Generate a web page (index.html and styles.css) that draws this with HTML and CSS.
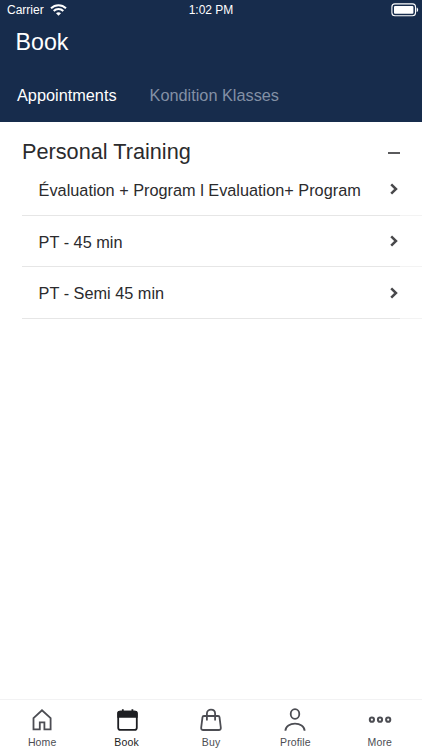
FILE: index.html
```html
<!DOCTYPE html>
<html lang="en">
  <head>
    <meta charset="utf-8" />
    <meta name="viewport" content="width=device-width, initial-scale=1.0" />
    <title>Book</title>
    <link rel="stylesheet" href="styles.css">
  </head>
  <body>
    <header class="header">
      <div class="statusbar">
        <div class="carrier">
          <span>Carrier</span>
          <svg class="wifi" width="17" height="12" viewBox="0 0 17 12" fill="none" stroke="#fff" stroke-width="2">
            <path d="M1 4.3C5.2 0.2 11.8 0.2 16 4.3" />
            <path d="M3.7 7C6.4 4.4 10.6 4.4 13.3 7" />
            <path d="M8.5 11.7L6 9.2C7.4 7.9 9.6 7.9 11 9.2Z" fill="#fff" stroke="none" />
          </svg>
        </div>
        <span class="time">1:02 PM</span>
        <svg class="battery" width="28" height="14" viewBox="0 0 28 14">
          <rect x="0.9" y="0.9" width="23.6" height="11.8" rx="3" fill="none" stroke="#fff" stroke-width="1.1" />
          <rect x="3" y="3" width="19.4" height="7.8" rx="1" fill="#fff" />
          <path d="M25.7 4.4C27.6 5 27.6 8.4 25.7 9Z" fill="#fff" />
        </svg>
      </div>
      <h1 class="title">Book</h1>
      <nav class="tabs">
        <a class="tab active">Appointments</a>
        <a class="tab">Kondition Klasses</a>
      </nav>
    </header>

    <main class="content">
      <div class="section-head">
        <h2>Personal Training</h2>
        <span class="minus"></span>
      </div>
      <ul class="services">
        <li>
          <span>Évaluation + Program l Evaluation+ Program</span>
          <svg class="chevron" width="8" height="12" viewBox="0 0 8 12"><path d="M1.2 1.3L6 6L1.2 10.7" /></svg>
        </li>
        <li>
          <span>PT - 45 min</span>
          <svg class="chevron" width="8" height="12" viewBox="0 0 8 12"><path d="M1.2 1.3L6 6L1.2 10.7" /></svg>
        </li>
        <li>
          <span>PT - Semi 45 min</span>
          <svg class="chevron" width="8" height="12" viewBox="0 0 8 12"><path d="M1.2 1.3L6 6L1.2 10.7" /></svg>
        </li>
      </ul>
    </main>

    <footer class="tabbar">
      <a class="tabbar-item">
        <svg width="24" height="24" viewBox="0 0 24 24">
          <path d="M3.5 10.2L12 2.3L20.6 10.2V21.3H14.4V14.4H9.8V21.3H3.5Z" />
        </svg>
        <span>Home</span>
      </a>
      <a class="tabbar-item active">
        <svg width="24" height="24" viewBox="0 0 24 24">
          <rect x="3.2" y="3.6" width="18.6" height="18.3" rx="2.2" />
          <path d="M3.2 5C3.2 4.2 3.8 3.6 4.6 3.6H20.4C21.2 3.6 21.8 4.2 21.8 5V8.8H3.2Z" fill="#1d1e22" />
          <path d="M7.8 1.3V5M17.4 1.3V5" />
        </svg>
        <span>Book</span>
      </a>
      <a class="tabbar-item">
        <svg width="24" height="24" viewBox="0 0 24 24">
          <path d="M4.9 8H19.1C19.9 8 20.4 8.4 20.5 9.1L21.8 19.5C22 21.2 21.2 22 19.8 22H4.2C2.8 22 2 21.2 2.2 19.5L3.5 9.1C3.6 8.4 4.1 8 4.9 8Z" />
          <path d="M7.9 12.5V5.6C7.9 0.3 16.1 0.3 16.1 5.6V12.5" />
        </svg>
        <span>Buy</span>
      </a>
      <a class="tabbar-item">
        <svg width="24" height="24" viewBox="0 0 24 24">
          <ellipse cx="12" cy="6" rx="4.3" ry="4.8" />
          <path d="M2.4 22.8C2.4 13.2 21.6 13.2 21.6 22.8" />
        </svg>
        <span>Profile</span>
      </a>
      <a class="tabbar-item">
        <svg class="dots" width="24" height="24" viewBox="0 0 24 24">
          <circle cx="3.9" cy="11.7" r="2.1" />
          <circle cx="12" cy="11.7" r="2.1" />
          <circle cx="20.2" cy="11.7" r="2.1" />
        </svg>
        <span>More</span>
      </a>
    </footer>
  </body>
</html>
```
FILE: styles.css
```css
* {
  box-sizing: border-box;
}

body {
  display: flex;
  flex-direction: column;
  height: 100vh;
  margin: 0;
  overflow: hidden;
  background-color: #fff;
  color: #2b2b2d;
  font-family: "Liberation Sans", Arial, sans-serif;
}

.header {
  height: 122px;
  background-color: #172c4c;
  color: #fff;
}

.statusbar {
  display: grid;
  grid-template-columns: 1fr auto 1fr;
  align-items: center;
  height: 20px;
  padding: 0 3px 0 7px;
  font-size: 12px;
}

.carrier {
  display: flex;
  align-items: center;
  gap: 6px;
}

.time {
  padding-right: 4px;
  font-size: 12px;
}

.battery {
  justify-self: end;
}

.title {
  margin: 7px 0 0 15.6px;
  font-size: 23.2px;
  font-weight: normal;
  line-height: 30px;
}

.tabs {
  display: flex;
  gap: 33px;
  margin-top: 23px;
  padding-left: 17px;
  font-size: 16.3px;
  line-height: 30px;
}

.tab {
  color: #8390a5;
}

.tab.active {
  color: #fff;
}

.content {
  flex: 1;
}

.section-head {
  display: flex;
  align-items: center;
  justify-content: space-between;
  height: 42px;
  padding: 18px 22px 0 22px;
}

.section-head h2 {
  margin: 0;
  font-size: 21.7px;
  font-weight: normal;
  line-height: 24px;
}

.minus {
  width: 12px;
  height: 2px;
  margin-top: 1px;
  background-color: #5a5a5c;
}

.services {
  margin: 0 0 0 22px;
  padding: 0;
  list-style: none;
}

.services li {
  display: flex;
  align-items: center;
  justify-content: space-between;
  height: 51.7px;
  padding: 2px 24px 1px 16.6px;
  background: linear-gradient(to right, #e6e6e6 378px, #f3f3f3 378px) bottom / 100% 1px no-repeat;
  font-size: 16.3px;
}

.chevron {
  margin-top: -2px;
  fill: none;
  stroke: #48484b;
  stroke-width: 2.5;
}

.tabbar {
  display: flex;
  height: 51px;
  border-top: 1px solid #f2f2f3;
}

.tabbar-item {
  display: flex;
  flex: 1;
  flex-direction: column;
  align-items: center;
  padding-top: 8px;
  color: #4c4d53;
  font-size: 10.5px;
  line-height: 12px;
  letter-spacing: 0.15px;
}

.tabbar-item svg {
  margin-bottom: 4px;
  fill: none;
  stroke: #4c4d53;
  stroke-width: 1.8;
}

.tabbar-item .dots {
  stroke-width: 2;
}

.tabbar-item.active {
  color: #1d1e22;
}

.tabbar-item.active svg {
  stroke: #1d1e22;
}
```
